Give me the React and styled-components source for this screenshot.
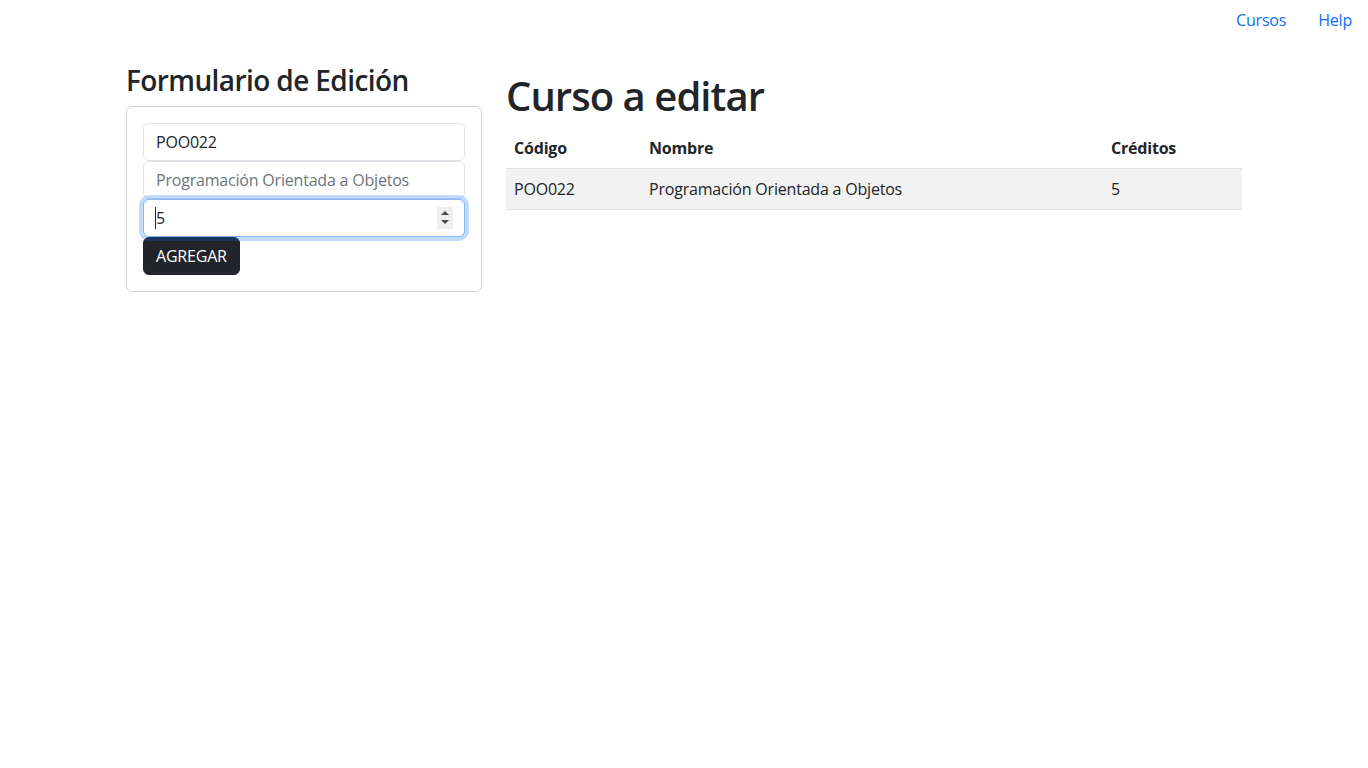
import React from "react";
import styled, { createGlobalStyle } from "styled-components";

const FONT = `"Open Sans", "Liberation Sans", sans-serif`;

const GlobalStyle = createGlobalStyle`
  *, *::before, *::after { box-sizing: border-box; }
  body {
    margin: 0;
    font-family: ${FONT};
    font-size: 16px;
    line-height: 1.5;
    letter-spacing: -0.2px;
    color: #212529;
    background: #fff;
  }
`;

const Nav = styled.nav`
  display: flex;
  justify-content: flex-end;
`;

const NavLink = styled.a`
  padding: 8px 16px;
  color: #0d6efd;
  text-decoration: none;
  cursor: pointer;
`;

const Container = styled.div`
  width: 1140px;
  margin: 24px auto 0;
  padding: 0 12px;
`;

const Row = styled.div`
  display: grid;
  grid-template-columns: 356px 736px;
  column-gap: 24px;
  align-items: start;
`;

const FormTitle = styled.h3`
  margin: 0 0 8px;
  font-size: 28px;
  font-weight: 600;
  line-height: 1.2;
  letter-spacing: -0.6px;
`;

const Card = styled.div`
  border: 1px solid rgba(0, 0, 0, 0.175);
  border-radius: 6px;
  padding: 16px;
`;

const Input = styled.input`
  display: block;
  width: 100%;
  height: 38px;
  padding: 6px 12px;
  font: inherit;
  letter-spacing: inherit;
  color: #212529;
  background: #fff;
  border: 1px solid ${(p) => (p.$focused ? "#86b7fe" : "#dee2e6")};
  border-radius: 6px;
  outline: 0;
  box-shadow: ${(p) => (p.$focused ? "0 0 0 4px rgba(13, 110, 253, 0.25)" : "none")};
  &::placeholder { color: #6c757d; }
  &::-webkit-inner-spin-button,
  &::-webkit-outer-spin-button {
    -webkit-appearance: none;
    margin: 0;
  }
`;

const FieldWrap = styled.div`
  position: relative;
`;

const Caret = styled.span`
  position: absolute;
  left: 12px;
  top: 8px;
  width: 1px;
  height: 22px;
  background: #212529;
  pointer-events: none;
`;

const Spinner = styled.span`
  position: absolute;
  right: 12px;
  top: 8px;
  width: 16px;
  height: 22px;
  background: #efefef;
  display: flex;
  flex-direction: column;
  align-items: center;
  justify-content: center;
  gap: 5px;
  pointer-events: none;
`;

const Arrow = styled.span`
  width: 0;
  height: 0;
  border-left: 4px solid transparent;
  border-right: 4px solid transparent;
  ${(p) => (p.$down ? "border-top: 4px solid #4a4a4a;" : "border-bottom: 4px solid #4a4a4a;")}
`;

const Button = styled.button`
  display: block;
  height: 38px;
  padding: 6px 12px;
  font: inherit;
  letter-spacing: inherit;
  color: #fff;
  background: #212529;
  border: 1px solid #212529;
  border-radius: 6px;
  cursor: pointer;
`;

const PageTitle = styled.h1`
  margin: 8px 0 8px;
  font-size: 40px;
  font-weight: 600;
  line-height: 1.2;
  letter-spacing: -0.95px;
`;

const Table = styled.table`
  width: 100%;
  border-collapse: collapse;
  table-layout: fixed;
`;

const Th = styled.th`
  width: ${(p) => (p.$width ? `${p.$width}px` : "auto")};
  text-align: left;
  padding: 8px;
  font-weight: 700;
  border-bottom: 1px solid #dee2e6;
`;

const Td = styled.td`
  padding: 8px;
  background: ${(p) => (p.$striped ? "#f2f2f2" : "#fff")};
  border-bottom: 1px solid #dee2e6;
`;

const course = { code: "POO022", name: "Programación Orientada a Objetos", credits: 5 };

export default function App() {
  return (
    <>
      <GlobalStyle />
      <Nav>
        <NavLink>Cursos</NavLink>
        <NavLink>Help</NavLink>
      </Nav>
      <Container>
        <Row>
          <div>
            <FormTitle>Formulario de Edición</FormTitle>
            <Card>
              <Input type="text" defaultValue={course.code} />
              <Input type="text" placeholder={course.name} />
              <FieldWrap>
                <Input type="number" defaultValue={course.credits} $focused />
                <Caret />
                <Spinner>
                  <Arrow />
                  <Arrow $down />
                </Spinner>
              </FieldWrap>
              <Button>AGREGAR</Button>
            </Card>
          </div>
          <div>
            <PageTitle>Curso a editar</PageTitle>
            <Table>
              <thead>
                <tr>
                  <Th $width={135}>Código</Th>
                  <Th>Nombre</Th>
                  <Th $width={139}>Créditos</Th>
                </tr>
              </thead>
              <tbody>
                <tr>
                  <Td $striped>{course.code}</Td>
                  <Td $striped>{course.name}</Td>
                  <Td $striped>{course.credits}</Td>
                </tr>
              </tbody>
            </Table>
          </div>
        </Row>
      </Container>
    </>
  );
}
